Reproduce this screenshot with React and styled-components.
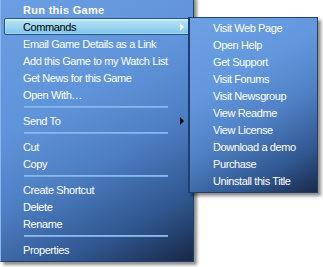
import React from 'react'
import styled, { createGlobalStyle } from 'styled-components'

const Global = createGlobalStyle`
html, body {
margin: 0;
padding: 0;
background: #fff;
overflow: hidden;
}
body {
font-family: "Liberation Sans", Arial, sans-serif;
font-size: 11px;
}`

const Stage = styled.div`
position: relative;
width: 323px;
height: 267px;
overflow: hidden;`

const Menu = styled.ul`
list-style: none;
margin: -5px 0 0 0;
padding: 5px 0 3px 0;
width: 192px;
border: 1px solid #223f6c;
border-left-color: #8db6ea;
border-top-color: #8db6ea;
background: linear-gradient(152deg, #6b9ee2 0%, #6094da 38%, #4d7ec2 60%, #30568f 82%, #172846 100%);
box-shadow: 3px 3px 3px rgba(0, 0, 0, 0.45);`

const SubMenu = styled.ul`
position: absolute;
left: 188px;
top: 17px;
list-style: none;
margin: 0;
padding: 1px 0 3px 0;
width: 127px;
border: 1px solid #223f6c;
border-left-width: 2px;
background: linear-gradient(150deg, #6ba1e5 0%, #6297dd 35%, #4f80c4 58%, #30578f 82%, #182a48 100%);
box-shadow: 3px 3px 3px rgba(0, 0, 0, 0.45);`

const Item = styled.li`
display: flex;
align-items: center;
justify-content: space-between;
height: 17px;
box-sizing: border-box;
margin: 0 3px;
padding: 0 6px 0 ${props => props.indent || 19}px;
border-radius: 2px;
color: ${props => props.active ? '#000' : '#fff'};
font-weight: ${props => props.bold ? 700 : 400};
letter-spacing: ${props => props.bold ? '0.3px' : '-0.4px'};
white-space: nowrap;
${props => props.active && `
border: 1px solid #2c5289;
padding-left: 18px;
padding-right: 5px;
background: linear-gradient(180deg, #d3f2fb 0%, #d3f2fb 8%, #aee0f3 14%, #9fd8f0 50%, #8fd0ec 70%, #7dc5e7 100%);
box-shadow: inset 0 0 0 1px rgba(220, 245, 252, 0.35);
`}`

const Arrow = styled.span`
width: 0;
height: 0;
border-top: 4px solid transparent;
border-bottom: 4px solid transparent;
border-left: 4px solid ${props => props.light ? '#fff' : '#000'};`

const Separator = styled.li`
height: 9px;
box-sizing: border-box;
padding: 3px 0 0 0;
margin: 0 25px 0 23px;
&::before {
  content: "";
  display: block;
  height: 2px;
  background: linear-gradient(180deg, #8fbef2, #74a6e4);
}`

const mainItems = [
    { label: 'Run this Game', bold: true },
    { label: 'Commands', active: true, sub: true },
    { label: 'Email Game Details as a Link' },
    { label: 'Add this Game to my Watch List' },
    { label: 'Get News for this Game' },
    { label: 'Open With…' },
    'sep',
    { label: 'Send To', sub: true },
    'sep',
    { label: 'Cut' },
    { label: 'Copy' },
    'sep',
    { label: 'Create Shortcut' },
    { label: 'Delete' },
    { label: 'Rename' },
    'sep',
    { label: 'Properties' },
]

const commands = [
    'Visit Web Page',
    'Open Help',
    'Get Support',
    'Visit Forums',
    'Visit Newsgroup',
    'View Readme',
    'View License',
    'Download a demo',
    'Purchase',
    'Uninstall this Title',
]

const App = () => {
    return (
        <Stage>
            <Global />
            <Menu>
                {mainItems.map((item, idx) =>
                    item === 'sep'
                        ? <Separator key={idx} />
                        : <Item key={idx} bold={item.bold} active={item.active}>
                            <span>{item.label}</span>
                            {item.sub && <Arrow light={item.active} />}
                        </Item>
                )}
            </Menu>
            <SubMenu>
                {commands.map((label, idx) =>
                    <Item key={idx} indent={20}>
                        <span>{label}</span>
                    </Item>
                )}
            </SubMenu>
        </Stage>
    )
}

export default App
